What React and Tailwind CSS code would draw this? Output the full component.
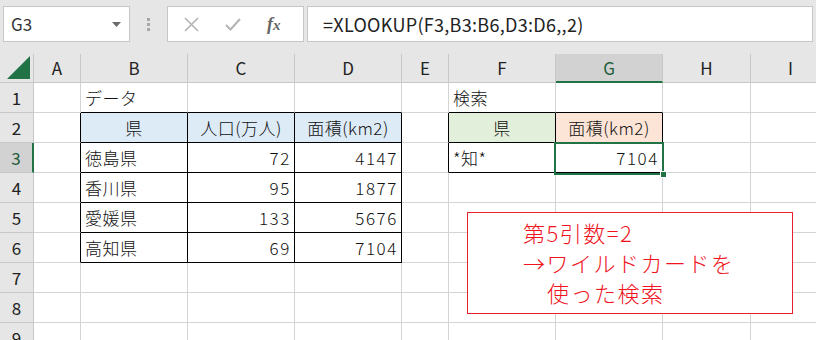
import React from 'react';

const FONT = { fontFamily: '"Noto Sans CJK JP", "Noto Sans", sans-serif' };

const colHeads = ['A', 'B', 'C', 'D', 'E', 'F', 'G', 'H', 'I'];

// cell contents by row
const data = {
  1: { B: { t: 'データ' }, F: { t: '検索' } },
  2: {
    B: { t: '県', center: true, bg: 'bg-[#ddebf7]' },
    C: { t: '人口(万人)', center: true, bg: 'bg-[#ddebf7]' },
    D: { t: '面積(km2)', center: true, bg: 'bg-[#ddebf7]' },
    F: { t: '県', center: true, bg: 'bg-[#e2efda]' },
    G: { t: '面積(km2)', center: true, bg: 'bg-[#fce4d6]' },
  },
  3: { B: { t: '徳島県' }, C: { t: '72', right: true }, D: { t: '4147', right: true }, F: { t: '*知*' }, G: { t: '7104', right: true } },
  4: { B: { t: '香川県' }, C: { t: '95', right: true }, D: { t: '1877', right: true } },
  5: { B: { t: '愛媛県' }, C: { t: '133', right: true }, D: { t: '5676', right: true } },
  6: { B: { t: '高知県' }, C: { t: '69', right: true }, D: { t: '7104', right: true } },
};

const blackRight = (r, c) =>
  (r >= 2 && r <= 6 && ['A', 'B', 'C', 'D'].includes(c)) ||
  (r >= 2 && r <= 3 && ['E', 'F', 'G'].includes(c));

const blackBottom = (r, c) =>
  (r >= 1 && r <= 6 && ['B', 'C', 'D'].includes(c)) ||
  (r >= 1 && r <= 3 && ['F', 'G'].includes(c));

function Cell({ r, c }) {
  const d = (data[r] && data[r][c]) || {};
  const br = blackRight(r, c) ? 'border-r-[#000]' : 'border-r-[#d4d4d4]';
  const bb = blackBottom(r, c) ? 'border-b-[#000]' : 'border-b-[#d4d4d4]';
  const align = d.center ? 'justify-center' : d.right ? 'justify-end' : 'justify-start';
  const track = d.right ? 'tracking-[1.6px] pr-[3px]' : 'tracking-[0.5px] pr-[4px]';
  return (
    <div
      className={`h-[30px] border-r border-b ${br} ${bb} ${d.bg || 'bg-white'} flex items-center ${align} pl-[4px] ${track} text-[17px] font-light text-[#111] whitespace-nowrap`}
    >
      {d.t}
    </div>
  );
}

export default function App() {
  return (
    <div className="w-[816px] h-[340px] overflow-hidden bg-white relative" style={FONT}>
      {/* formula bar */}
      <div className="h-[54px] bg-[#e6e6e6] flex items-start pt-[6px] pl-[3px]">
        <div className="w-[127px] h-[36px] bg-white border border-[#c6c6c6] flex items-center justify-between pl-[7px] pr-[8px]">
          <span className="text-[17px] text-[#333]">G3</span>
          <svg width="9" height="5" viewBox="0 0 9 5"><path d="M0 0h9L4.5 5z" fill="#6b6b6b" /></svg>
        </div>
        <div className="w-[37px] h-[36px] flex flex-col items-center justify-center gap-[2px]">
          <span className="w-[3px] h-[3px] bg-[#a8a8a8]" />
          <span className="w-[3px] h-[3px] bg-[#a8a8a8]" />
          <span className="w-[3px] h-[3px] bg-[#a8a8a8]" />
        </div>
        <div className="w-[137px] h-[36px] bg-white border border-[#c6c6c6] flex items-center pl-[16px] gap-[26px]">
          <svg width="15" height="15" viewBox="0 0 15 15"><path d="M1 1l13 13M14 1L1 14" stroke="#b4b4b4" strokeWidth="1.6" /></svg>
          <svg width="16" height="13" viewBox="0 0 16 13"><path d="M1 7l4.5 4.5L15 1" stroke="#b4b4b4" strokeWidth="2" fill="none" /></svg>
          <span className="text-[18px] text-[#666] italic font-bold" style={{ fontFamily: '"Liberation Serif", serif' }}>
            f<span className="text-[15px]">x</span>
          </span>
        </div>
        <div className="ml-[3px] w-[506px] h-[36px] bg-white border border-[#c6c6c6] flex items-center pl-[15px]">
          <span className="text-[18px] tracking-[0.3px] text-[#222]">=XLOOKUP(F3,B3:B6,D3:D6,,2)</span>
        </div>
      </div>

      {/* sheet grid */}
      <div className="grid grid-cols-[34px_47px_107px_107px_107px_47px_107px_107px_88px_80px]">
        {/* header row */}
        <div className="h-[29px] bg-[#e6e6e6] border-r border-b border-[#c8c8c8] flex items-end justify-end">
          <svg width="23" height="23" viewBox="0 0 23 23" className="mr-[3px] mb-[3px]"><path d="M23 0V23H0z" fill="#217346" /></svg>
        </div>
        {colHeads.map((c) =>
          c === 'G' ? (
            <div key={c} className="h-[29px] bg-[#d2d2d2] border-r border-[#c8c8c8] border-b-2 border-b-[#217346] flex items-center justify-center text-[17px] text-[#1e5c3a]">
              {c}
            </div>
          ) : (
            <div key={c} className="h-[29px] bg-[#e6e6e6] border-r border-b border-[#c8c8c8] flex items-center justify-center text-[17px] text-[#222]">
              {c}
            </div>
          )
        )}

        {[1, 2, 3, 4, 5, 6, 7, 8, 9].map((r) => (
          <React.Fragment key={r}>
            {r === 3 ? (
              <div className="h-[30px] bg-[#d2d2d2] border-r-2 border-r-[#217346] border-b border-b-[#c8c8c8] flex items-center justify-center text-[17px] text-[#1e5c3a]">
                {r}
              </div>
            ) : (
              <div className="h-[30px] bg-[#e6e6e6] border-r border-b border-[#c8c8c8] flex items-center justify-center text-[17px] text-[#222]">
                {r}
              </div>
            )}
            {colHeads.map((c) => (
              <Cell key={c} r={r} c={c} />
            ))}
          </React.Fragment>
        ))}
      </div>

      {/* active cell G3 */}
      <div className="absolute left-[554px] top-[142px] w-[110px] h-[33px] border-2 border-[#217346] pointer-events-none" />
      <div className="absolute left-[660px] top-[171px] w-[7px] h-[7px] bg-[#217346] border border-white" />

      {/* callout */}
      <div className="absolute left-[467px] top-[212px] w-[326px] h-[102px] bg-white border border-[#e8202a] pt-[4px] pl-[55px] text-[22px] leading-[30px] tracking-[1.5px] font-light text-[#f0141e] whitespace-nowrap">
        <div>第5引数=2</div>
        <div>→ワイルドカードを</div>
        <div className="pl-[24px]">使った検索</div>
      </div>
    </div>
  );
}
